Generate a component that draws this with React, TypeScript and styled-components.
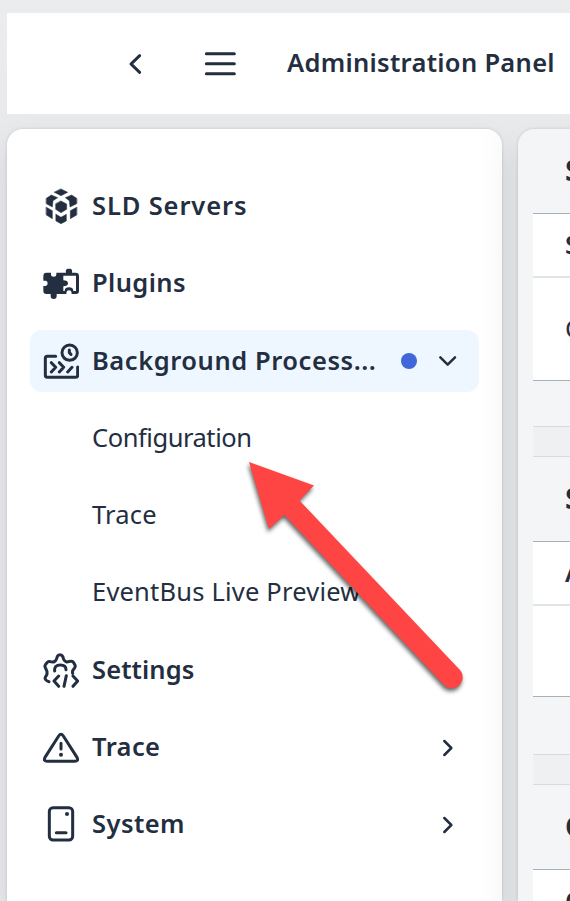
import React from "react";
import styled, { createGlobalStyle } from "styled-components";

const ink = "#232e41";

const GlobalStyle = createGlobalStyle`
  * { box-sizing: border-box; }
  html, body { margin: 0; height: 100%; overflow: hidden; }
  body { background: #eaebed; color: ${ink}; font-family: "Noto Sans", "Open Sans", sans-serif; }
`;

const Page = styled.div`
  position: relative;
  width: 570px;
  height: 901px;
  padding: 13px 0 0 7px;
  overflow: hidden;
  background: linear-gradient(#ebecee, #e8e9eb 140px);
`;

const Header = styled.header`
  display: flex;
  align-items: center;
  height: 101px;
  padding-left: 112px;
  background: #fff;
`;

const IconButton = styled.button<{ $gap: number }>`
  display: flex;
  width: 34px;
  height: 34px;
  margin-right: ${(p) => p.$gap}px;
  padding: 0;
  border: 0;
  background: none;
  color: inherit;
`;

const Title = styled.h1`
  margin: 0;
  padding-bottom: 3px;
  font-size: 25.5px;
  line-height: 36px;
  font-weight: 650;
  letter-spacing: 0.3px;
  white-space: nowrap;
`;

const Body = styled.div`
  display: flex;
  gap: 16px;
  padding-top: 15px;
  height: 787px;
`;

const Sidebar = styled.nav`
  flex: 0 0 495px;
  padding: 46px 23px 0;
  border-radius: 16px 16px 0 0;
  background: linear-gradient(90deg, #fff 474px, #fbfbfb);
  box-shadow: 0 0 3px rgba(34, 40, 50, 0.18), 0 16px 32px rgba(34, 48, 70, 0.1);
`;

const Item = styled.div<{ $active?: boolean }>`
  display: flex;
  align-items: center;
  height: 62px;
  margin-bottom: 15.3px;
  padding: 0 14px 0 13px;
  border-radius: 12px;
  background: ${(p) => (p.$active ? "#eef7ff" : "transparent")};
`;

const IconSlot = styled.span`
  display: flex;
  width: 36px;
  height: 36px;
  margin-right: 13px;
`;

const Label = styled.span<{ $bold?: boolean; $spacing: number }>`
  flex: 1;
  padding-bottom: 2px;
  font-size: 25.5px;
  line-height: 36px;
  font-weight: ${(p) => (p.$bold ? 650 : 400)};
  letter-spacing: ${(p) => p.$spacing}px;
  white-space: nowrap;
`;

const Dot = styled.span`
  width: 16px;
  height: 16px;
  margin-right: 14px;
  border-radius: 50%;
  background: #4067da;
`;

const Content = styled.main`
  flex: 0 0 80px;
  padding-left: 15px;
  border-radius: 16px 0 0 0;
  background: #f4f5f7;
  box-shadow: 0 0 3px rgba(34, 40, 50, 0.18), 0 16px 32px rgba(34, 48, 70, 0.08);
`;

const SectionTitle = styled.div<{ $height: number }>`
  display: flex;
  align-items: center;
  height: ${(p) => p.$height}px;
  padding: 0 0 4px 32px;
  font-size: 29px;
  font-weight: 700;
`;

const Table = styled.div`
  border-top: 1px solid #a7afbb;
  border-bottom: 1px solid #a7afbb;
  background: #fff;
`;

const Cell = styled.div<{ $height: number; $head?: boolean }>`
  display: flex;
  align-items: center;
  height: ${(p) => p.$height}px;
  padding: 0 0 2px 32px;
  font-size: 25.5px;
  font-weight: ${(p) => (p.$head ? 650 : 400)};
  border-bottom: ${(p) => (p.$head ? "2px solid #e3e4e6" : "0")};
`;

const Divider = styled.div<{ $top: number }>`
  height: 31px;
  margin-top: ${(p) => p.$top}px;
  border-top: 1px solid #d8dadd;
  border-bottom: 1px solid #d8dadd;
  background: #eff0f2;
`;

const ArrowOverlay = styled.svg`
  position: absolute;
  left: 235px;
  top: 450px;
  filter: drop-shadow(-1px 3px 2px rgba(0, 0, 0, 0.6));
`;

type Drawing = { children: React.ReactNode; size?: number };
const Glyph = ({ children, size = 36 }: Drawing) => (
  <svg width={size} height={size} viewBox={`0 0 ${size * 3} ${size * 3}`} fill="none"
    stroke={ink} strokeWidth="9" strokeLinecap="round" strokeLinejoin="round">
    {children}
  </svg>
);

const ServersIcon = () => (
  <Glyph>
    <g fill={ink} stroke={ink} strokeWidth="1.5">
      <path d="M54 3 74 13 54 23 34 13Z" />
      <path d="M10 31 25 21 44 29 30 38 28 57 10 47Z" />
      <path d="M101 31 86 21 67 29 79 38 81 57 101 47Z" />
      <path d="M54 39 71 48V64L54 74 38 64V48Z" />
      <path d="M10 58 28 68V92L10 81Z" />
      <path d="M101 58 82 68V92L101 81Z" />
      <path d="M39 79 54 88 70 79V99L54 107 39 99Z" />
    </g>
  </Glyph>
);

const PluginsIcon = () => (
  <Glyph>
    <path fill={ink} stroke="none" d="M10 23H24V29Q24 35 32 35T40 29V23H69C67 12 72 11 78 11S89 12 87 23H98Q108 23 108 33V78Q108 87 99 87H41V93Q41 102 32 102T23 93V87H10Q1 87 1 78V63H8Q14 63 14 55T8 47H1V33Q1 23 10 23Z" />
    <path fill="#fff" stroke="none" d="M61 32H99V78H91C90 69 86 67 78 67S66 69 65 78H61V64Q75 64 75 55T61 46Z" />
    <path fill="#fff" stroke="none" d="M70 87C70 79 73 76 78 76S86 79 86 87Z" />
  </Glyph>
);

const ProcessIcon = () => (
  <Glyph>
    <circle cx="80" cy="29" r="23" />
    <path d="M79 21V29L84 34" />
    <path d="M38 40H13Q7 40 7 46V97Q7 103 13 103H98Q104 103 104 97V72M25 59 38 73 25 87M49 59 62 73 49 87M87 73 74 87" />
  </Glyph>
);

const GearCodeIcon = () => (
  <Glyph>
    <path d="M18 89C8 87 5 80 7 76L12 67V58L7 47Q4 42 8 37L14 30Q17 27 23 29L32 30Q39 27 41 20L43 13Q45 8 51 8T59 13L62 22Q65 28 71 30L83 28Q88 26 92 32L96 39Q98 44 94 49L89 56Q88 62 89 64" />
    <path d="M35 57Q33 39 52 39Q69 39 69 53M47 72 33 87 47 103M70 71 63 103M90 72 104 87 90 103" />
  </Glyph>
);

const WarningIcon = () => (
  <Glyph>
    <path d="M47 21Q54 11 61 21L102 85Q108 97 95 97H13Q0 97 6 85ZM54 43V60" />
    <circle cx="54" cy="77" r="6" fill={ink} stroke="none" />
  </Glyph>
);

const SystemIcon = () => (
  <Glyph>
    <rect x="19" y="5" width="70" height="97" rx="11" />
    <path d="M40 80H69" />
    <circle cx="72" cy="24" r="6" fill={ink} stroke="none" />
  </Glyph>
);

const Chevron = ({ down = false }: { down?: boolean }) => (
  <Glyph size={34}>
    <path strokeWidth="7.5" d={down ? "M28 40 50 62 72 40" : "M40 33 61 54 40 75"} />
  </Glyph>
);

type Entry = {
  text: string;
  icon?: React.ReactNode;
  spacing: number;
  active?: boolean;
  arrow?: boolean;
};

const entries: Entry[] = [
  { text: "SLD Servers", icon: <ServersIcon />, spacing: 0.87 },
  { text: "Plugins", icon: <PluginsIcon />, spacing: 0.4 },
  { text: "Background Process...", icon: <ProcessIcon />, spacing: 0.55, active: true },
  { text: "Configuration", spacing: -0.45 },
  { text: "Trace", spacing: 0.2 },
  { text: "EventBus Live Preview", spacing: 0.2 },
  { text: "Settings", icon: <GearCodeIcon />, spacing: 0.1 },
  { text: "Trace", icon: <WarningIcon />, spacing: 0.4, arrow: true },
  { text: "System", icon: <SystemIcon />, spacing: 0.45, arrow: true },
];

export default function App() {
  return (
    <>
      <GlobalStyle />
      <Page>
        <Header>
          <IconButton $gap={50} aria-label="Back">
            <Glyph size={34}><path d="M62 26 36 51 62 76" /></Glyph>
          </IconButton>
          <IconButton $gap={50} aria-label="Menu">
            <Glyph size={34}><path d="M10 20H94M10 50H94M10 80H94" /></Glyph>
          </IconButton>
          <Title>Administration Panel</Title>
        </Header>
        <Body>
          <Sidebar>
            {entries.map((e, i) => (
              <Item key={i} $active={e.active}>
                <IconSlot>{e.icon}</IconSlot>
                <Label $bold={!!e.icon} $spacing={e.spacing}>{e.text}</Label>
                {e.active && <Dot />}
                {(e.active || e.arrow) && <Chevron down={e.active} />}
              </Item>
            ))}
          </Sidebar>
          <Content>
            <SectionTitle $height={84}>S</SectionTitle>
            <Table>
              <Cell $height={64} $head>S</Cell>
              <Cell $height={102}>C</Cell>
            </Table>
            <Divider $top={45} />
            <SectionTitle $height={84}>S</SectionTitle>
            <Table>
              <Cell $height={64} $head>A</Cell>
              <Cell $height={90} />
            </Table>
            <Divider $top={57} />
            <SectionTitle $height={84}>C</SectionTitle>
            <Table>
              <Cell $height={64} $head>C</Cell>
            </Table>
          </Content>
        </Body>
        <ArrowOverlay width="245" height="260" viewBox="235 450 245 260" aria-hidden="true">
          <path fill="#ff4444" d="M249 462 314 485.5 299.5 500.5 459.5 669.5A10.7 10.7 0 0 1 444 685L284.5 515 269 529Z" />
        </ArrowOverlay>
      </Page>
    </>
  );
}
